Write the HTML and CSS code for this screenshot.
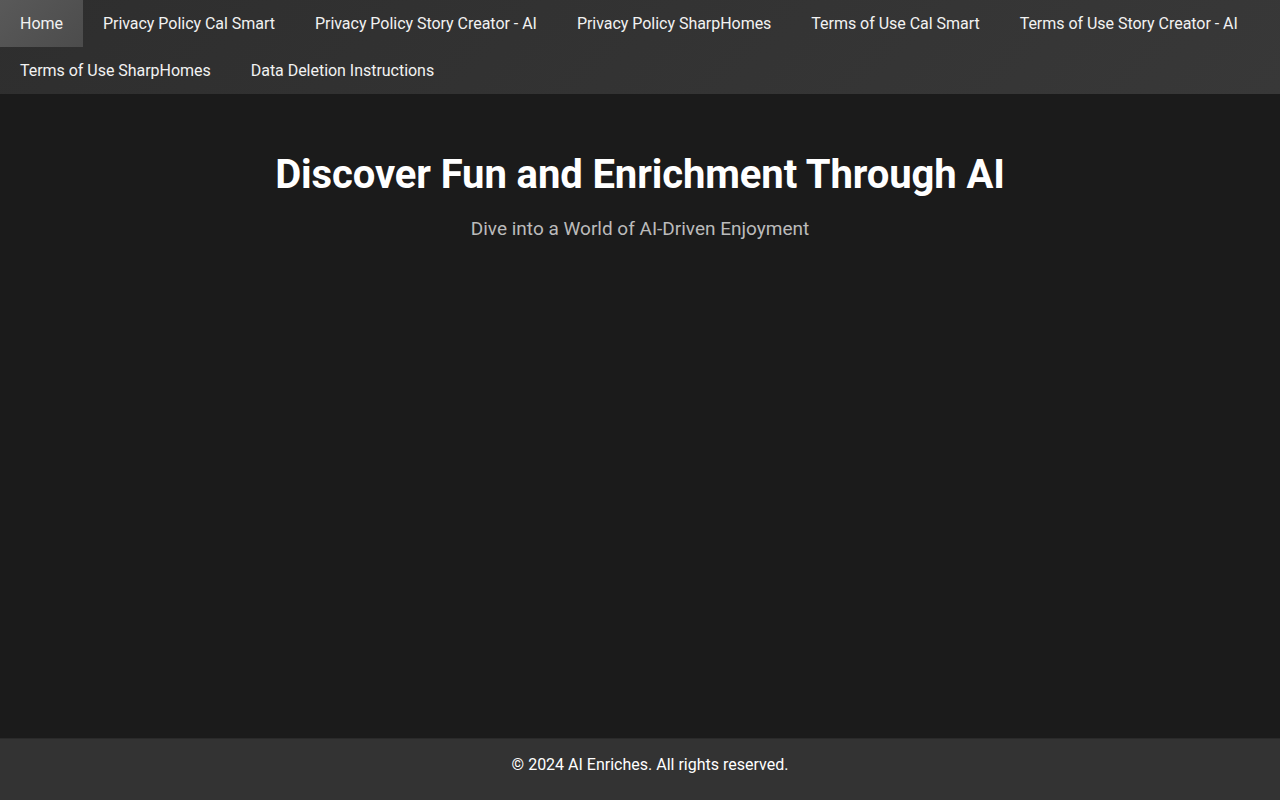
FILE: index.html
```html
<!DOCTYPE html>
<html lang="en">
<head>
    <meta charset="UTF-8">
    <meta name="viewport" content="width=device-width, initial-scale=1.0">
    <title>AI Enriches</title>
    <link rel="stylesheet" href="styles.css">
</head>
<body>
    <nav class="topnav">
        <a href="#" class="active">Home</a>
        <a href="#">Privacy Policy Cal Smart</a>
        <a href="#">Privacy Policy Story Creator - AI</a>
        <a href="#">Privacy Policy SharpHomes</a>
        <a href="#">Terms of Use Cal Smart</a>
        <a href="#">Terms of Use Story Creator - AI</a>
        <a href="#">Terms of Use SharpHomes</a>
        <a href="#">Data Deletion Instructions</a>
    </nav>

    <header class="hero">
        <h1>Discover Fun and Enrichment Through AI</h1>
        <p>Dive into a World of AI-Driven Enjoyment</p>
    </header>

    <footer class="footer">
        <p>&copy; 2024 AI Enriches. All rights reserved.</p>
    </footer>
</body>
</html>
```

FILE: styles.css
```css
body {
    font-family: Roboto, 'Liberation Sans', Arial, sans-serif;
    margin: 0;
    padding: 0;
    background-color: #1b1b1b;
    color: #fff;
    min-height: 100vh;
    display: flex;
    flex-direction: column;
}
.topnav {
    display: flex;
    flex-wrap: wrap;
    background: linear-gradient(135deg, #2e2e2e, #383838);
}
.topnav a {
    display: block;
    padding: 14px 20px;
    font-size: 16px;
    line-height: 19px;
    letter-spacing: -0.03px;
    color: #f2f2f2;
    text-decoration: none;
}
.topnav a.active {
    background: linear-gradient(135deg, #595959, #4c4c4c);
}
.hero {
    flex: 1;
    text-align: center;
    padding: 57px 20px 0;
}
.hero h1 {
    margin: 0;
    font-size: 40px;
    font-weight: 700;
    line-height: 47px;
    letter-spacing: -0.1px;
}
.hero p {
    margin: 20px 0 0;
    font-size: 19px;
    line-height: 22px;
    color: #bbb;
}
.footer {
    background-color: #333;
    border-top: 1px solid #2a2a2a;
    text-align: center;
    padding: 16px 0 26px 20px;
}
.footer p {
    margin: 0;
    font-size: 16px;
    line-height: 19px;
}
```
